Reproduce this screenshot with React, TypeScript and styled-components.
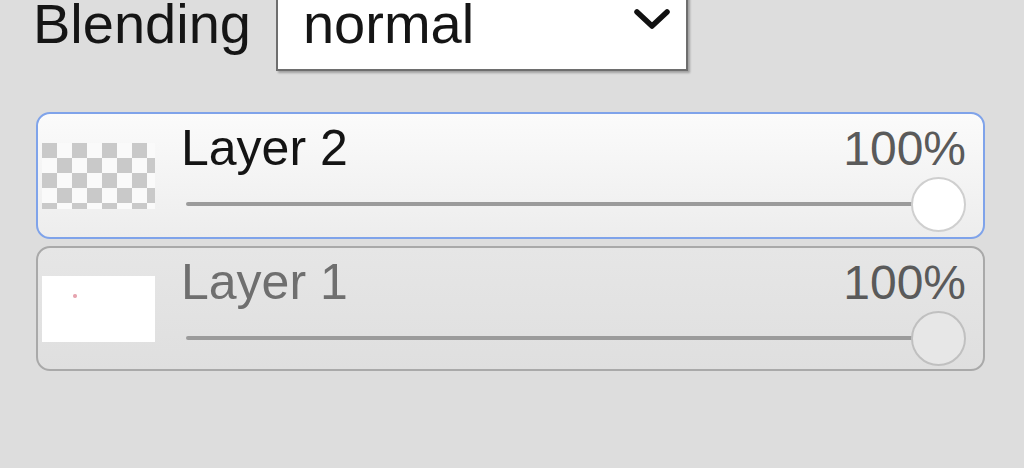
import React from "react";
import styled, { createGlobalStyle } from "styled-components";

const Global = createGlobalStyle`
  html, body { margin: 0; padding: 0; background: #dddddd; overflow: hidden; }
  body { font-family: "Liberation Sans", Arial, sans-serif; }
`;

const Panel = styled.div`
  width: 1024px;
  height: 468px;
  padding: 0 39px 0 36px;
  box-sizing: border-box;
  background: #dddddd;
  display: flex;
  flex-direction: column;
`;

const TopRow = styled.div`
  display: flex;
  align-items: flex-start;
  margin-top: -10px;
  gap: 25px;
`;

const Label = styled.span`
  font-size: 56px;
  line-height: 63px;
  color: #151515;
  padding-top: 2px;
  margin-left: -3px;
`;

const Select = styled.div`
  width: 412px;
  height: 81px;
  box-sizing: border-box;
  background: #fff;
  border: 2px solid #6e6e6e;
  border-top: none;
  box-shadow: 2px 2px 2px rgba(0, 0, 0, 0.28);
  display: flex;
  align-items: flex-start;
  justify-content: space-between;
  padding: 2px 15px 0 25px;
`;

const SelectValue = styled.span`
  font-size: 56px;
  line-height: 63px;
  color: #151515;
`;

const Chevron = styled.svg`
  margin-top: 16px;
  flex: none;
`;

const LayerList = styled.div`
  margin-top: 41px;
  display: flex;
  flex-direction: column;
  gap: 7px;
`;

const Card = styled.div<{ $active?: boolean }>`
  display: flex;
  align-items: center;
  gap: 26px;
  box-sizing: border-box;
  height: ${(p) => (p.$active ? 127 : 125)}px;
  border: 2px solid ${(p) => (p.$active ? "#7fa3ea" : "#a9a9a9")};
  border-radius: 14px;
  padding: 0 17px 0 4px;
  background: ${(p) =>
    p.$active
      ? "linear-gradient(#fbfbfb, #ededed)"
      : "linear-gradient(#e6e6e6, #dfdfdf)"};
`;

const Thumb = styled.div<{ $transparent?: boolean }>`
  width: 113px;
  height: 66px;
  flex: none;
  background: ${(p) =>
    p.$transparent
      ? "conic-gradient(#fafafa 25%, #c9c9c9 0 50%, #fafafa 0 75%, #c9c9c9 0) 0 0 / 30px 30px"
      : "radial-gradient(circle at 33px 20px, rgba(210,90,110,0.55) 0 1.5px, transparent 2.5px), #ffffff"};
`;

const Info = styled.div`
  flex: 1;
  align-self: stretch;
  display: flex;
  flex-direction: column;
  padding-top: 6px;
`;

const TitleRow = styled.div`
  display: flex;
  justify-content: space-between;
  align-items: baseline;
  line-height: 56px;
  height: 56px;
`;

const Name = styled.span<{ $dim?: boolean }>`
  font-size: 50px;
  color: ${(p) => (p.$dim ? "#6f6f6f" : "#141414")};
`;

const Percent = styled.span`
  font-size: 48px;
  color: #5a5a5a;
`;

const Slider = styled.div`
  display: flex;
  align-items: center;
  height: 56px;
`;

const Track = styled.div`
  flex: 1;
  height: 4px;
  margin-left: 5px;
  margin-right: -28px;
  background: #9b9b9b;
  border-radius: 2px;
`;

const Knob = styled.div<{ $dim?: boolean }>`
  position: relative;
  width: 55px;
  height: 55px;
  box-sizing: border-box;
  border-radius: 50%;
  border: 2px solid ${(p) => (p.$dim ? "#c0c0c0" : "#cfcfcf")};
  background: ${(p) => (p.$dim ? "#e7e7e7" : "#ffffff")};
  flex: none;
`;

type LayerProps = { name: string; active?: boolean };

const LayerCard = ({ name, active }: LayerProps) => (
  <Card $active={active}>
    <Thumb $transparent={active} />
    <Info>
      <TitleRow>
        <Name $dim={!active}>{name}</Name>
        <Percent>100%</Percent>
      </TitleRow>
      <Slider>
        <Track />
        <Knob $dim={!active} />
      </Slider>
    </Info>
  </Card>
);

export default function App() {
  return (
    <>
      <Global />
      <Panel>
        <TopRow>
          <Label>Blending</Label>
          <Select>
            <SelectValue>normal</SelectValue>
            <Chevron width="38" height="24" viewBox="0 0 38 24">
              <polyline
                points="4,4 19,18 34,4"
                fill="none"
                stroke="#111"
                strokeWidth="5.5"
                strokeLinecap="round"
                strokeLinejoin="round"
              />
            </Chevron>
          </Select>
        </TopRow>
        <LayerList>
          <LayerCard name="Layer 2" active />
          <LayerCard name="Layer 1" />
        </LayerList>
      </Panel>
    </>
  );
}
